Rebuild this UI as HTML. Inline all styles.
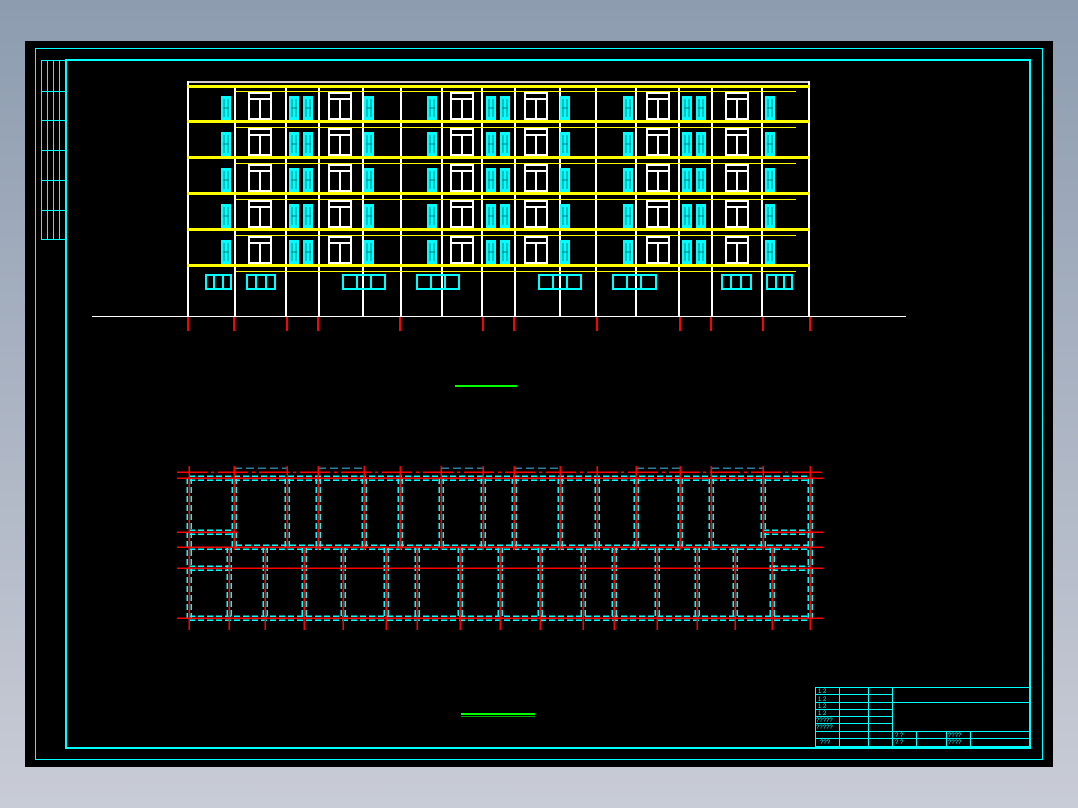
<!DOCTYPE html>
<html><head><meta charset="utf-8"><style>
html,body{margin:0;padding:0;width:1078px;height:808px;overflow:hidden;background:linear-gradient(#8d9cb0,#c9ccd6);}
svg{position:absolute;left:0;top:0}
</style></head><body>
<svg width="1078" height="808" viewBox="0 0 1078 808" xmlns="http://www.w3.org/2000/svg" shape-rendering="crispEdges">
<defs>
<g id="cw"><rect x="0" y="0" width="10" height="24" fill="#00ffff"/><path d="M3 3v18M7 3v18M2 12h6" stroke="#008080" stroke-width="1"/></g>
<g id="wd"><rect x="1" y="0" width="22" height="26" fill="none" stroke="#fff" stroke-width="2"/><path d="M1 6h22M12 6v20" stroke="#fff" stroke-width="2"/></g>
<g id="cp"><use href="#cw" x="0" y="0"/><use href="#cw" x="14" y="0"/></g>
<g id="row">
<use href="#cw" x="221" y="96"/><use href="#wd" x="248" y="93"/><use href="#cp" x="289" y="96"/><use href="#wd" x="328" y="93"/><use href="#cw" x="364" y="96"/>
<use href="#cw" x="427" y="96"/><use href="#wd" x="450" y="93"/><use href="#cp" x="486" y="96"/><use href="#wd" x="524" y="93"/><use href="#cw" x="560" y="96"/>
<use href="#cw" x="623" y="96"/><use href="#wd" x="646" y="93"/><use href="#cp" x="682" y="96"/><use href="#wd" x="725" y="93"/><use href="#cw" x="765" y="96"/>
</g>
</defs>
<rect x="25" y="41" width="1028" height="726" fill="#000"/>
<rect x="35.5" y="48.5" width="1007" height="711" fill="none" stroke="#00ffff" stroke-width="1"/>
<rect x="66" y="60" width="964" height="688" fill="none" stroke="#00ffff" stroke-width="2"/>
<!-- left strip -->
<g stroke="#00ffff" stroke-width="1" fill="none">
<rect x="41.5" y="60.5" width="24" height="179"/>
<path d="M47.5 60v180M53.5 60v180M59.5 60v180M41 91.5h25M41 120.5h25M41 150.5h25M41 180.5h25M41 210.5h25"/>
</g>
<!-- elevation -->
<rect x="187" y="81" width="623" height="2" fill="#ccc"/>
<g stroke="#fff" stroke-width="2">
<path d="M188 81v235M809 81v235M235 86v230M286 86v230M319 86v230M363 86v230M401 86v230M442 86v230M482 86v230M515 86v230M560 86v230M596 86v230M636 86v230M679 86v230M712 86v230M762 86v230"/>
</g>
<g fill="#ffff00">
<rect x="187" y="85" width="623" height="3"/><rect x="187" y="120" width="623" height="3"/><rect x="187" y="156" width="623" height="3"/><rect x="187" y="192" width="623" height="3"/><rect x="187" y="228" width="623" height="3"/><rect x="187" y="264" width="623" height="3"/>
</g>
<g stroke="#ffff00" stroke-width="1"><path d="M236 91.5h560M236 127.5h560M236 163.5h560M236 199.5h560M236 235.5h560M236 271.5h560"/></g>
<use href="#row"/><use href="#row" y="36"/><use href="#row" y="72"/><use href="#row" y="108"/><use href="#row" y="144"/>
<g fill="none" stroke="#00ffff" stroke-width="2">
<rect x="206" y="275" width="25" height="14"/><rect x="247" y="275" width="28" height="14"/><rect x="343" y="275" width="42" height="14"/><rect x="417" y="275" width="42" height="14"/><rect x="539" y="275" width="42" height="14"/><rect x="613" y="275" width="43" height="14"/><rect x="722" y="275" width="29" height="14"/><rect x="767" y="275" width="25" height="14"/>
<path d="M214 275v14M223 275v14M256 275v14M266 275v14M357 275v14M371 275v14M431 275v14M445 275v14M553 275v14M567 275v14M627 275v14M641 275v14M731 275v14M741 275v14M776 275v14M784 275v14"/>
</g>
<path d="M92 316.5h814" stroke="#fff" stroke-width="1"/>
<g stroke="#ff0000" stroke-width="2"><path d="M188 317v14M234 317v14M287 317v14M318 317v14M400 317v14M483 317v14M514 317v14M597 317v14M680 317v14M711 317v14M763 317v14M810 317v14"/></g>
<rect x="455" y="385" width="62" height="2" fill="#00ff00"/>
<rect x="461" y="713" width="74" height="2" fill="#00ff00"/><rect x="461" y="716" width="74" height="1" fill="#00aa00"/>
<!-- plan -->
<g stroke="#00ffff" stroke-width="1.5" stroke-dasharray="6,3" fill="none">
<path d="M189 476h621M189 480h621M236 545h574M189 549h621M189 616h621M189 620h621M189 530h45M189 534h45M763 530h47M763 534h47M189 566h40M189 570h40M772 566h38M772 570h38"/>
<path d="M187 478v140M191 478v140M808 478v140M812 478v140"/>
<path d="M232 478v69M236 478v69M285 478v69M289 478v69M316 478v69M320 478v69M362 478v69M366 478v69M398 478v69M402 478v69M439 478v69M443 478v69M481 478v69M485 478v69M512 478v69M516 478v69M558 478v69M562 478v69M595 478v69M599 478v69M634 478v69M638 478v69M678 478v69M682 478v69M709 478v69M713 478v69M761 478v69M765 478v69"/>
<path d="M227 547v71M231 547v71M263 547v71M267 547v71M302 547v71M306 547v71M341 547v71M345 547v71M384 547v71M388 547v71M415 547v71M419 547v71M458 547v71M462 547v71M498 547v71M502 547v71M538 547v71M542 547v71M581 547v71M585 547v71M612 547v71M616 547v71M655 547v71M659 547v71M695 547v71M699 547v71M733 547v71M737 547v71M770 547v71M774 547v71"/>
</g>
<g stroke="#2a7fa0" stroke-width="1.5" stroke-dasharray="8,4"><path d="M234 468h53M318 468h46M441 468h42M514 468h46M636 468h44M711 468h52"/></g>
<g stroke="#ff0000" stroke-width="1.5">
<path d="M177 472h646" stroke-dasharray="30,4,3,4"/>
<path d="M177 478h646M177 532h60M763 532h60M177 547h646M177 568h646M177 618h646"/>
<path d="M189 466v164M810 466v164M234 466v84M287 466v84M318 466v84M364 466v84M400 466v84M441 466v84M483 466v84M514 466v84M560 466v84M597 466v84M636 466v84M680 466v84M711 466v84M763 466v84"/>
<path d="M229 547v83M265 547v83M304 547v83M343 547v83M386 547v83M417 547v83M460 547v83M500 547v83M540 547v83M583 547v83M614 547v83M657 547v83M697 547v83M735 547v83M772 547v83"/>
</g>
<!-- title block -->
<g stroke="#00ffff" stroke-width="1" fill="none">
<rect x="815.5" y="687.5" width="214" height="59"/>
<path d="M839.5 687v59M868.5 687v59M892.5 687v59M916.5 731v15M946.5 731v15M970.5 731v15"/>
<path d="M815 694.5h77M815 702.5h215M815 709.5h77M815 716.5h77M815 723.5h77M815 731.5h215M815 738.5h215"/>
</g>
<g fill="#00ffff" font-family="Liberation Sans, sans-serif" font-size="6">
<text x="818" y="693">1 2</text><text x="818" y="701">1 2</text><text x="818" y="708">1 2</text><text x="818" y="715">1 2</text><text x="816" y="722">?????</text><text x="816" y="729">?????</text><text x="820" y="744">???</text>
<text x="895" y="737">? ?</text><text x="895" y="744">? ?</text><text x="948" y="737">????</text><text x="948" y="744">????</text>
</g>
</svg>
</body></html>
